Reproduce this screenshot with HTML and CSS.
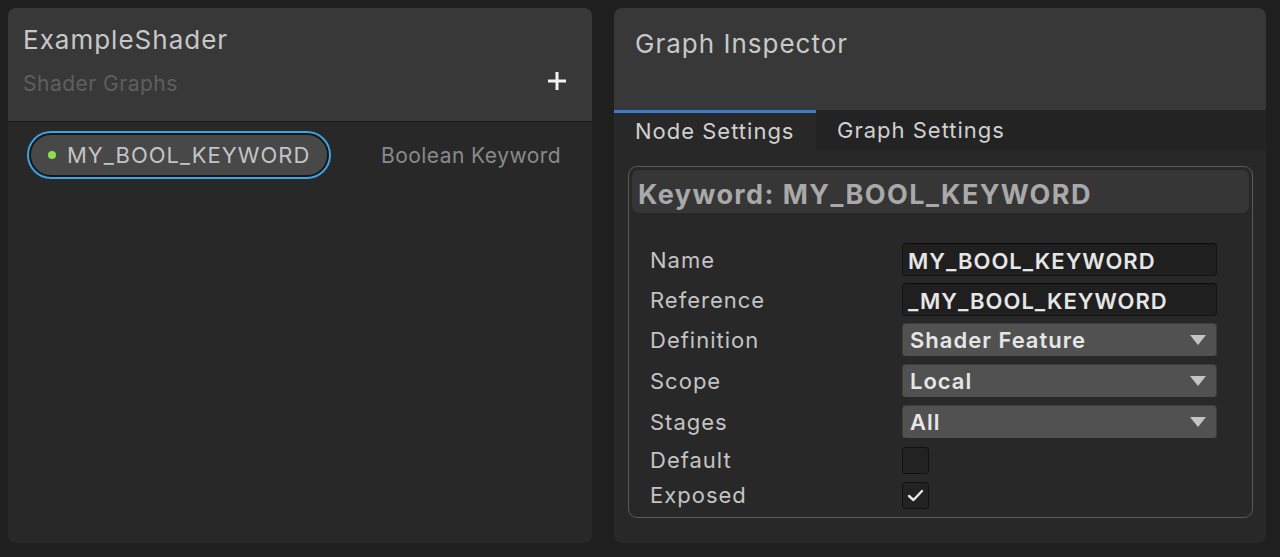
FILE: index.html
```html
<!DOCTYPE html>
<html>
<head>
<meta charset="utf-8">
<link rel="stylesheet" href="styles.css">
</head>
<body>
<div class="page">
  <section class="panel left">
    <header class="left-head">
      <div class="title">ExampleShader</div>
      <div class="sub-row">
        <span class="subtitle">Shader Graphs</span>
        <svg class="plus" width="20" height="20" viewBox="0 0 20 20"><path d="M10 1 V19 M1 10 H19" stroke="#f2f2f2" stroke-width="3"/></svg>
      </div>
    </header>
    <div class="left-body">
      <div class="item-row">
        <div class="pill"><span class="dot"></span><span class="pill-text">MY_BOOL_KEYWORD</span></div>
        <span class="item-type">Boolean Keyword</span>
      </div>
    </div>
  </section>
  <section class="panel right">
    <header class="right-head">
      <div class="title">Graph Inspector</div>
    </header>
    <nav class="tabs">
      <div class="tab active">Node Settings</div>
      <div class="tab">Graph Settings</div>
    </nav>
    <div class="right-body">
      <div class="box">
        <div class="box-head">Keyword: MY_BOOL_KEYWORD</div>
        <div class="props">
          <div class="label">Name</div>
          <div class="field text-field">MY_BOOL_KEYWORD</div>
          <div class="label">Reference</div>
          <div class="field text-field">_MY_BOOL_KEYWORD</div>
          <div class="label">Definition</div>
          <div class="field dropdown"><span>Shader Feature</span><span class="arrow"></span></div>
          <div class="label">Scope</div>
          <div class="field dropdown"><span>Local</span><span class="arrow"></span></div>
          <div class="label">Stages</div>
          <div class="field dropdown"><span>All</span><span class="arrow"></span></div>
          <div class="label">Default</div>
          <div class="check-cell"><span class="check"></span></div>
          <div class="label">Exposed</div>
          <div class="check-cell"><span class="check">
            <svg width="17" height="13" viewBox="0 0 17 13"><path d="M2 7 L6.5 11 L15 2" fill="none" stroke="#e8e8e8" stroke-width="2.4" stroke-linecap="round" stroke-linejoin="round"/></svg>
          </span></div>
        </div>
      </div>
    </div>
  </section>
</div>
</body>
</html>
```
FILE: styles.css
```css
* { box-sizing: border-box; }
html, body { margin: 0; padding: 0; }
body {
  background: #1f1f1f;
  font-family: Inter, "Noto Sans", "DejaVu Sans", sans-serif;
  width: 1280px;
  height: 557px;
  overflow: hidden;
}
.page {
  display: flex;
  gap: 22px;
  padding: 8px 14px 14px 8px;
  height: 557px;
}
.panel {
  background: #282828;
  border-radius: 8px;
  overflow: hidden;
  height: 535px;
  display: flex;
  flex-direction: column;
}
.left { width: 584px; }
.right { width: 652px; }

.left-head {
  background: #383838;
  height: 114px;
  border-bottom: 1px solid #1c1c1c;
  padding: 16px 25px 0 15px;
}
.title {
  font-size: 26px;
  line-height: 32px;
  letter-spacing: 1px;
  color: #c8c8c8;
}
.sub-row {
  display: flex;
  justify-content: space-between;
  align-items: center;
  margin-top: 12px;
  height: 30px;
}
.subtitle {
  font-size: 21px;
  letter-spacing: 0.5px;
  color: #5f5f5f;
}
.plus {
  margin-top: -4px;
}
.left-body {
  padding: 11px 31px 0 21px;
}
.item-row {
  display: flex;
  justify-content: space-between;
  align-items: center;
}
.pill {
  width: 300px;
  height: 44px;
  border-radius: 22px;
  background: #484848;
  border: 2px solid #161616;
  box-shadow: 0 0 0 2px #3aa4e4;
  display: flex;
  align-items: center;
  padding-left: 17px;
}
.dot {
  width: 8px;
  height: 8px;
  border-radius: 50%;
  background: #8be04e;
  margin-right: 11px;
}
.pill-text {
  font-size: 22px;
  letter-spacing: 1px;
  color: #c4c4c4;
}
.item-type {
  font-size: 21px;
  letter-spacing: 0.45px;
  color: #8a8a8a;
}

.right-head {
  background: #383838;
  height: 102px;
  padding: 20px 21px 0 21px;
}
.tabs {
  display: flex;
  height: 40px;
  background: #232323;
}
.tab {
  padding: 0 21px;
  font-size: 22px;
  line-height: 40px;
  letter-spacing: 1px;
  color: #d0d0d0;
}
.tab.active {
  background: #282828;
  border-top: 3px solid #3a7cd0;
  line-height: 37px;
  width: 202px;
}
.right-body {
  padding: 16px 13px 0 14px;
}
.box {
  border: 1px solid #5a5a5a;
  border-radius: 9px;
  height: 352px;
  padding: 3px 3px 0 3px;
}
.box-head {
  background: #363636;
  border-radius: 7px;
  height: 43px;
  line-height: 50px;
  padding-left: 6px;
  font-size: 27px;
  font-weight: 700;
  letter-spacing: 1.4px;
  color: #a9a9a9;
}
.props {
  display: grid;
  grid-template-columns: 252px 315px;
  grid-template-rows: 33px 33px 34px 34px 34px 28px 28px;
  row-gap: 7px;
  margin-top: 30px;
  padding-left: 18px;
}
.label {
  font-size: 22px;
  letter-spacing: 1px;
  color: #c4c4c4;
  display: flex;
  align-items: center;
}
.field {
  font-size: 22px;
  font-weight: 600;
  letter-spacing: 1px;
  color: #e6e6e6;
  border-radius: 4px;
  display: flex;
  align-items: center;
}
.text-field {
  background: #1f1f1f;
  border: 1px solid #141414;
  border-top-color: #0c0c0c;
  padding-left: 5px;
  padding-top: 3px;
}
.dropdown {
  background: #515151;
  border: 1px solid #3d3d3d;
  border-bottom-color: #262626;
  padding: 0 10px 0 7px;
  justify-content: space-between;
}
.arrow {
  width: 0;
  height: 0;
  border-left: 8px solid transparent;
  border-right: 8px solid transparent;
  border-top: 10px solid #c4c4c4;
}
.check-cell {
  display: flex;
  align-items: center;
}
.check {
  width: 27px;
  height: 27px;
  background: #222222;
  border: 1px solid #121212;
  border-radius: 3px;
  display: flex;
  align-items: center;
  justify-content: center;
}
```
